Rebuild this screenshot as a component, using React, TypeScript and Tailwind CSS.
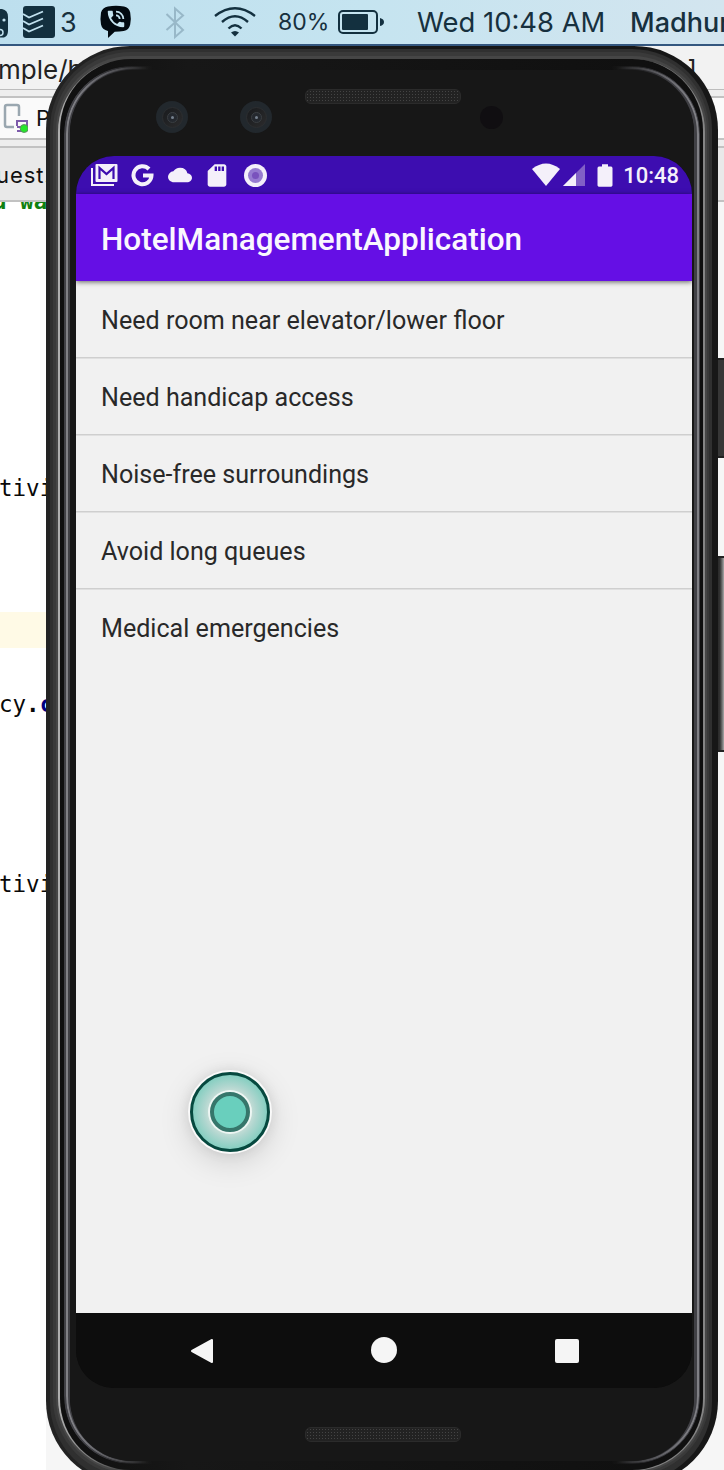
import { MdCloud, MdSdCard, MdBatteryFull, MdPhoneInTalk } from "react-icons/md";

const requests = [
  "Need room near elevator/lower floor",
  "Need handicap access",
  "Noise-free surroundings",
  "Avoid long queues",
  "Medical emergencies",
];

function MenuBar() {
  return (
    <div className="relative flex h-[46px] w-full shrink-0 overflow-hidden border-b-2 border-[#34577f] bg-linear-to-r from-[#bddfee] via-[#c5e4f0] to-[#d3e5ef] text-[#17303e]">
      <svg className="h-11 w-[60px] shrink-0" viewBox="0 0 60 44">
        <path d="M0 9h2q6 1 6 8v14q0 5-4 6.500H0z" fill="#13303f" />
        <circle cx="4" cy="20" r="1.600" fill="#c1e1ef" />
        <circle cx="0" cy="32.500" r="3" fill="none" stroke="#c1e1ef" strokeWidth="1.500" />
        <rect x="23" y="6" width="32" height="32" rx="3" fill="#13303f" />
        <g fill="none" stroke="#c1e1ef" strokeWidth="1.900">
          <path d="M23 14l6 3.500L43 11.500M23 21l6 3.500L43 18.500M23 28l6 3.500L43 25.500" />
        </g>
      </svg>
      <span className="w-[40px] shrink-0 font-[Inter] text-[27px] leading-[45px]">3</span>
      <div className="relative h-11 w-[34px] shrink-0">
        <svg className="h-11 w-[34px]" viewBox="0 0 34 44">
          <path d="M8 6.500q8-1.500 16 0 5 1 6.200 6 1.200 6 0 12-1.200 5.500-6.500 6.500-4 .8-9 .8L8 38v-7Q2 29.500 1 24.500q-1-6 0-12Q2.500 7.500 8 6.500z" fill="#020a10" />
        </svg>
        <MdPhoneInTalk className="absolute top-[8px] left-[5px] size-[22px] text-[#c5e4f0]" />
      </div>
      <svg className="h-11 w-[144px] shrink-0" viewBox="134 0 144 44" fill="none">
        <path d="M166.500 14L183 30l-8 7V8.500l8 7L166.500 30" stroke="#98b8c8" strokeWidth="2" />
        <g stroke="#13303f" strokeWidth="2.400">
          <path d="M215 16Q235 .5 255 16M222 22Q235 10.500 248 22M228.500 28.500Q235 22 241.500 28.500" />
        </g>
        <path d="M231 32.500q4-3 8 0l-4 4z" fill="#13303f" />
      </svg>
      <span className="w-[60px] shrink-0 font-[Inter] text-[23px] leading-[44px]">80%</span>
      <svg className="h-11 w-[79px] shrink-0" viewBox="338 0 79 44">
        <rect x="339" y="11" width="38" height="22" rx="4" fill="none" stroke="#13303f" strokeWidth="2" />
        <rect x="342" y="14" width="26" height="16" rx="1" fill="#13303f" />
        <path d="M380 18q4 1 4 4t-4 4z" fill="#13303f" />
      </svg>
      <span className="w-[213px] shrink-0 whitespace-nowrap font-[Inter] text-[27.400px] leading-[44px]">Wed 10:48 AM</span>
      <span className="shrink-0 whitespace-nowrap font-[Inter] text-[27px] font-medium leading-[45px]">Madhuri</span>
    </div>
  );
}

function CodeLine({ children }: { children: React.ReactNode }) {
  return (
    <div className="-ml-px h-[36px] whitespace-pre font-['DejaVu_Sans_Mono'] text-[22.500px] leading-[37px] text-[#080808]">
      {children}
    </div>
  );
}

function Editor() {
  return (
    <div className="flex grow flex-col overflow-hidden bg-white">
      <div className="flex h-[44px] shrink-0 items-center justify-between border-b border-[#bdbdbd] bg-[#f2f2f2] pt-[3px] font-[Inter] text-[26px] text-[#222]">
        <span className="-ml-0.5">mple/ho</span>
        <span className="mr-[27px]">]</span>
      </div>
      <div className="h-[6px] shrink-0 bg-[#eeeeee]" />
      <div className="flex h-[44px] shrink-0 items-center border-y-2 border-[#c2c2c2] bg-[#fafafa]">
        <svg className="mr-[8px] h-[30px] w-[28px]" viewBox="0 0 28 30">
          <path d="M19 13V4q0-2-2-2H7Q5 2 5 4v18q0 2 2 2h7" fill="none" stroke="#9aa7b0" strokeWidth="2.500" />
          <path d="M22 28h-5M17 23v-5h10v6h-10" fill="none" stroke="#7d5bab" strokeWidth="2" />
          <circle cx="24.200" cy="25.500" r="4" fill="#25e52b" stroke="#5e8f60" />
        </svg>
        <span className="font-[Inter] text-[22px] text-[#111]">Pixel</span>
      </div>
      <div className="h-[6px] shrink-0 bg-[#eeeeee]" />
      <div className="h-[56px] shrink-0 border-y-2 border-[#c2c2c2] bg-[#e9e9e9]">
        <span className="-ml-[4px] font-[Inter] text-[22px] leading-[54px] tracking-[0.900px] text-[#111]">uest.</span>
      </div>
      <div className="h-[10px] shrink-0 overflow-hidden">
        <div className="-mt-[16px] -ml-[7px] whitespace-pre font-['DejaVu_Sans_Mono'] text-[22.500px] font-bold leading-[30px] text-[#108010]">d wait</div>
      </div>
      <div className="h-[258px] shrink-0" />
      <CodeLine>tivity</CodeLine>
      <div className="h-[106px] shrink-0" />
      <div className="h-[36px] shrink-0 bg-[#fffae6]" />
      <div className="h-[38px] shrink-0" />
      <CodeLine>cy<b>.</b><b className="text-[#000080]">c</b></CodeLine>
      <div className="h-[144px] shrink-0" />
      <CodeLine>tivity</CodeLine>
    </div>
  );
}

function Bezel() {
  return (
    <>
      <div className="absolute inset-0 rounded-[84px] bg-linear-to-r from-[#232323] via-[#171717] to-[#171717]" />
      <div className="absolute top-[3px] right-[6px] bottom-[3px] left-[4px] rounded-[80px] bg-[#303030]" />
      <div className="absolute top-[6px] right-[9px] bottom-[9px] left-[7px] rounded-[78px] bg-[#3a3a3a]" />
      <div className="absolute top-[10px] right-[11px] bottom-[12px] left-[10px] rounded-[75px] bg-[#464646]" />
      <div className="absolute top-[13px] right-[13px] bottom-[14px] left-[12px] rounded-[73px] bg-linear-to-r from-[#b0b0b0] from-0% via-[#464646] via-10% to-[#858585]" />
      <div className="absolute top-[13px] right-[15px] bottom-[15px] left-[14px] rounded-[71px] bg-linear-to-r from-[#0f0f0f] from-0% via-[#171717] via-20% to-[#0f0f0f]" />
      <div className="absolute top-[20px] right-[18px] bottom-[21px] left-[18px] rounded-[68px] border-[6px] border-[#404045] [mask-image:linear-gradient(to_right,black,black_4%,transparent_14%,transparent_86%,black_96%,black)]" />
      <div className="absolute top-[21px] right-[19px] bottom-[22px] left-[20px] rounded-[67px] border-2 border-[#808085] [mask-image:linear-gradient(to_right,black,black_1%,transparent_13%,transparent_87%,black_99%,black)]" />
      <div className="absolute top-[24px] right-[24px] bottom-[24px] left-[24px] rounded-[62px] bg-[#171717]" />
    </>
  );
}

function Speaker() {
  return (
    <div className="h-[15px] w-[156px] rounded-[6px] border border-[#2b2b2b] bg-[#222] bg-[radial-gradient(#444_0.8px,transparent_1px)] bg-[size:3px_3px]" />
  );
}

function Camera() {
  return (
    <div className="flex size-8 items-center justify-center rounded-full bg-[#22282d]">
      <div className="flex size-[21px] items-center justify-center rounded-full border border-[#2c2e30] bg-linear-to-br from-[#191b1e] to-[#2b2b2c]">
        <div className="flex size-[11px] items-center justify-center rounded-full border border-[#3a3e42] bg-[#24282e]">
          <div className="size-[3px] rounded-full bg-[#76818e]" />
        </div>
      </div>
    </div>
  );
}

function StatusBar() {
  return (
    <div className="flex h-[38px] shrink-0 items-center bg-[#3d0db0] pr-[13px] pl-[15px] text-[#f4f0fa]">
      <svg className="mr-[13px] h-[24px] w-[27px] shrink-0" viewBox="0 0 27 24" fill="none" stroke="currentColor">
        <path d="M1 5v17h22" strokeWidth="2" />
        <rect x="4.500" y="1" width="22" height="18" rx="1" fill="currentColor" stroke="none" />
        <path d="M8.500 16V5l7 6 7-6v11" stroke="#3d0db0" strokeWidth="2.200" />
      </svg>
      <svg className="mr-[14px] size-[23px] shrink-0" viewBox="0 0 23 23" fill="none">
        <path d="M18 5A9 9 0 1 0 20.500 11.500H12" stroke="currentColor" strokeWidth="4" />
      </svg>
      <MdCloud preserveAspectRatio="none" className="mr-[11px] h-[22px] w-[24px] shrink-0" />
      <MdSdCard preserveAspectRatio="none" className="mr-[13px] h-[27px] w-[28px] shrink-0" />
      <div className="flex size-[23px] shrink-0 items-center justify-center rounded-full bg-current">
        <div className="flex size-[15px] items-center justify-center rounded-full bg-[#967bd0]">
          <div className="size-[7px] rounded-full bg-[#7952bd]" />
        </div>
      </div>
      <svg className="ml-auto h-[24px] w-[54px] shrink-0" viewBox="0 0 54 24">
        <path d="M0 6Q14-5 28 6L14 23z" fill="currentColor" />
        <path d="M31 23L53 1v22z" fill="#8160c6" />
        <path d="M31 23l13-13v13z" fill="currentColor" />
      </svg>
      <MdBatteryFull preserveAspectRatio="none" className="ml-px h-[27px] w-[36px] shrink-0" />
      <span className="pt-[2px] font-[Roboto] text-[22px] font-medium leading-none">10:48</span>
    </div>
  );
}

function TouchPoint() {
  return (
    <div className="absolute top-[916px] left-[114px] flex size-[80px] items-center justify-center rounded-full border-[3px] border-[#06493f] bg-[radial-gradient(circle,#dce5df_30%,#b0d6cf_50%,#83cec0_72%)] shadow-[0_0_0_2px_#fafafa,0_8px_32px_#00000028,0_0_14px_#0000001c]">
      <div className="size-[40px] rounded-full border-4 border-[#36766b] bg-[#69cfbd] shadow-[0_0_0_2px_#edf6f3]" />
    </div>
  );
}

function Screen() {
  return (
    <div className="relative flex h-[1232px] w-[616px] flex-col overflow-hidden rounded-[38px] bg-[#0d0d0d] font-[Roboto]">
      <StatusBar />
      <div className="relative z-10 flex h-[87px] shrink-0 items-center bg-[#650fe5] px-[25px] pt-[4px] text-[31.500px] font-medium text-[#faf7fe] shadow-[0_1px_5px_#0009]">
        HotelManagementApplication
      </div>
      <ul className="grow bg-[#f1f1f1]">
        {requests.map((request) => (
          <li key={request} className="flex h-[77px] items-center px-[25px] pt-[2px] text-[25.100px] text-[#292929] not-last:shadow-[inset_0_-1px_#cfcfcf,0_1px_#e0e0e0]">
            {request}
          </li>
        ))}
      </ul>
      <div className="flex h-[75px] shrink-0 items-center justify-between bg-[#0d0d0d] px-[112px] text-[#f5f5f5]">
        <svg className="size-[28px]" viewBox="0 0 28 28">
          <path d="M4 14L24 3v22z" fill="currentColor" stroke="currentColor" strokeWidth="2" strokeLinejoin="round" />
        </svg>
        <div className="mr-[4px] mb-px size-[26px] rounded-full bg-current" />
        <div className="mr-px size-[24px] rounded-[2px] bg-current" />
      </div>
      <TouchPoint />
    </div>
  );
}

function Phone() {
  return (
    <div className="absolute top-[46px] left-[46px] h-[1439px] w-[672px]">
      <div className="absolute top-[312px] left-[670px] h-[100px] w-3 border-y-2 border-[#202020] bg-[#363636]" />
      <div className="absolute top-[510px] left-[670px] h-[196px] w-2 border-y-2 border-[#222] bg-linear-to-r from-[#222] via-[#333] to-[#aaa]" />
      <Bezel />
      <div className="relative flex flex-col items-center">
        <div className="relative flex h-[110px] w-full justify-center pt-[43px] pl-[2px]">
          <Speaker />
          <div className="absolute top-[55px] left-[110px]"><Camera /></div>
          <div className="absolute top-[55px] left-[194px]"><Camera /></div>
          <div className="absolute top-[60px] left-[434px] size-[23px] rounded-full bg-[#100e11]" />
        </div>
        <div className="ml-[4px]"><Screen /></div>
        <div className="mt-[39px] pl-[2px]"><Speaker /></div>
      </div>
    </div>
  );
}

export default function App() {
  return (
    <main className="relative flex h-[1470px] w-[724px] flex-col overflow-hidden bg-white">
      <MenuBar />
      <Editor />
      <div className="absolute top-[202px] left-[46px] h-[1268px] w-[678px] bg-[#f6f6f6]" />
      <Phone />
    </main>
  );
}
